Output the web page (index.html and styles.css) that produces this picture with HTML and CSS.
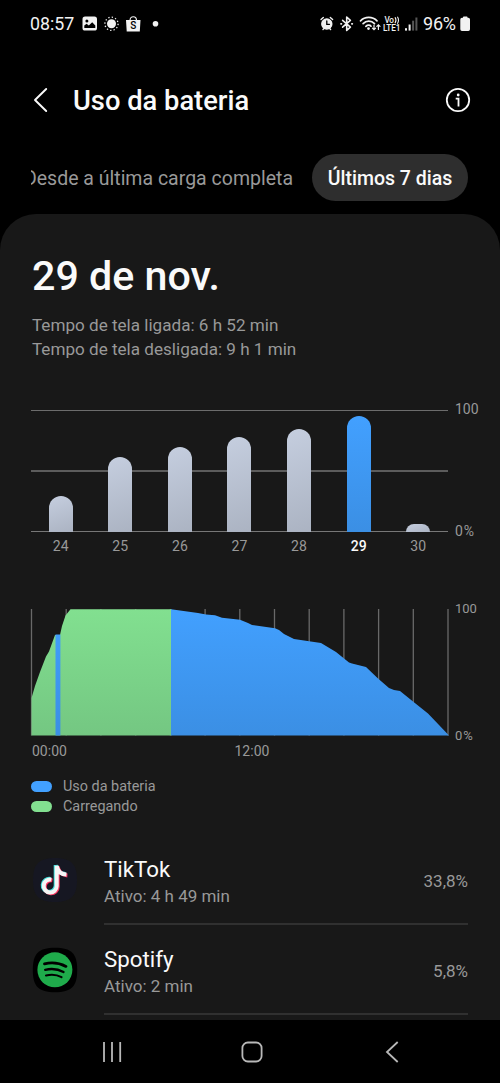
FILE: index.html
```html
<!DOCTYPE html>
<html lang="pt-BR">
<head>
<meta charset="utf-8">
<title>Uso da bateria</title>
<link rel="stylesheet" href="styles.css">
</head>
<body>
<div class="screen">
  <div class="status">
    <span class="clock">08:57</span>
    <svg class="notif" width="80" height="18" viewBox="0 0 80 18">
      <rect x="0.5" y="1.5" width="14.5" height="14" rx="2.6" fill="#f2f2f2"/>
      <circle cx="4.9" cy="6" r="1.5" fill="#000"/>
      <path d="M2.3 13V10.6L4.6 8.7L6.8 10.6L10.2 7.2L13.3 10.4V13Z" fill="#000"/>
      <circle cx="29.5" cy="8.8" r="4.5" fill="#f2f2f2"/>
      <circle cx="29.5" cy="8.8" r="6.6" fill="none" stroke="#f2f2f2" stroke-width="1.3" stroke-dasharray="1.3 2.156"/>
      <path d="M44 5H58.5L57.8 16.5H44.7Z" fill="#f2f2f2"/>
      <path d="M48 5.5C48 0.5 54.500 0.500 54.500 5.500" fill="none" stroke="#f2f2f2" stroke-width="1.2"/>
      <text x="51.3" y="14.3" class="bag-letter">S</text>
      <circle cx="73.500" cy="8.800" r="2.800" fill="#f2f2f2"/>
    </svg>
    <svg class="signals" width="102" height="18" viewBox="0 0 102 18">
      <g fill="none" stroke="#f2f2f2" stroke-width="1.4" stroke-linecap="round">
        <circle cx="6.8" cy="9" r="5" fill="#f2f2f2"/>
        <path d="M1 4.6L3.3 2.5M12.6 4.6L10.3 2.5M3 14.5L4 13.5M10.6 14.5L9.6 13.5"/>
        <path d="M6.8 6V9.3H9.5" stroke="#000" stroke-width="1.3"/>
        <path d="M22.6 5.3L30.4 12.2L26.7 15.400V2L30.400 5.400L22.600 12.200" stroke-linejoin="round" stroke-width="1.6"/>
        <path d="M21 8.800H21.400M31.900 8.800H32.300" stroke-width="1.800"/>
        <path d="M40.500 5.800C45 1.200 52.500 1.200 57 5.800M43.100 8.600C46.300 5.300 51.300 5.300 54.500 8.600M45.900 11.300C47.500 9.800 50 9.800 51 11.200" stroke-width="1.700"/>
        <circle cx="48.500" cy="13.600" r="0.700" fill="#f2f2f2"/>
        <path d="M54 10V14.600M52.400 13.100L54 14.700L55.600 13.100M58.400 14.500V10M56.800 11.400L58.400 9.800L60 11.400" stroke-width="1.200"/>
      </g>
      <text x="64.500" y="8" class="net" textLength="9.500">Vo</text>
      <path d="M75 2.300Q77 5.200 75 8.200M77.400 1.800Q79.600 5.200 77.400 8.700" fill="none" stroke="#f2f2f2" stroke-width="1.100"/>
      <text x="63" y="16" class="net" textLength="17.500">LTE1</text>
      <rect x="85" y="13.200" width="2" height="2.400" fill="#f2f2f2"/>
      <rect x="88.600" y="9.500" width="2" height="6.100" fill="#f2f2f2"/>
      <rect x="92.100" y="5.700" width="2" height="9.900" fill="#555"/>
      <rect x="95.400" y="2.500" width="2" height="13.100" fill="#555"/>
    </svg>
    <span class="level">96%</span>
    <svg class="battery" width="11" height="16" viewBox="0 0 11 16"><path d="M3 1.8V1.2Q3 .5 3.8 .5H6.8Q7.5 .5 7.5 1.2V1.8H8.3Q10 1.8 10 3.5V13.2Q10 15 8.3 15H2Q.3 15 .3 13.2V3.5Q.3 1.8 2 1.8Z" fill="#f2f2f2"/></svg>
  </div>

  <div class="header">
    <svg class="back" width="16" height="26" viewBox="0 0 16 26"><path d="M13.200 2L2 13L13.200 24" fill="none" stroke="#fafafa" stroke-width="1.9" stroke-linecap="round" stroke-linejoin="round"/></svg>
    <h1>Uso da bateria</h1>
    <svg class="info" width="26" height="26" viewBox="0 0 26 26"><circle cx="13" cy="13" r="11.200" fill="none" stroke="#fafafa" stroke-width="1.800"/><circle cx="13.200" cy="8" r="1.400" fill="#fafafa"/><path d="M10.700 11.700H13.500V19.600" fill="none" stroke="#fafafa" stroke-width="1.800"/></svg>
  </div>

  <div class="tabs">
    <div class="tab-clip"><span class="tab">Desde a última carga completa</span></div>
    <span class="tab-active">Últimos 7 dias</span>
  </div>

  <div class="panel">
    <h2>29 de nov.</h2>
    <div class="times">
      <div>Tempo de tela ligada: 6 h 52 min</div>
      <div>Tempo de tela desligada: 9 h 1 min</div>
    </div>

    <div class="chart days">
      <div class="plot-col">
        <div class="bars">
          <i style="height:36px"></i><i style="height:75px"></i><i style="height:85px"></i><i style="height:95px"></i><i style="height:103px"></i><i class="sel" style="height:116px"></i><i style="height:8px"></i>
        </div>
        <div class="day-labels"><span>24</span><span>25</span><span>26</span><span>27</span><span>28</span><span class="on">29</span><span>30</span></div>
      </div>
      <div class="scale"><span>100</span><span class="zero">0%</span></div>
    </div>

    <div class="chart hours">
      <div class="plot-col">
        <svg class="area" width="418" height="128" viewBox="0 0 418 128">
          <defs>
            <linearGradient id="blue" x1="0" y1="0" x2="0" y2="127" gradientUnits="userSpaceOnUse"><stop offset="0" stop-color="#42a0ff"/><stop offset="1" stop-color="#3b8fe4"/></linearGradient>
            <linearGradient id="green" x1="0" y1="0" x2="0" y2="127" gradientUnits="userSpaceOnUse"><stop offset="0" stop-color="#82e090"/><stop offset="1" stop-color="#74c782"/></linearGradient>
          </defs>
          <path d="M.5 1V127.500M35.200 1V127.500M69.900 1V127.500M104.700 1V127.500M139.400 1V127.500M174.100 1V127.500M208.800 1V127.500M243.500 1V127.500M278.200 1V127.500M312.900 1V127.500M347.600 1V127.500M382.300 1V127.500M417 1V127.500" stroke="#696969" stroke-width="1.3"/>
          <path d="M.5 127.500V90L4 78L9 64L15 48.500L18 43.500L24 27H29L31 18L34.500 7.500L39.500 1.300H140.500V127.500Z" fill="url(#green)"/>
          <rect x="24.500" y="26.500" width="4.900" height="101" fill="url(#blue)"/>
          <path d="M140 127.500V1.300L167 5L175 6.600L184 7.300L191 9.700L209 11.700L217 15L221 17L244 20.300L248 22L253 26L263 31L278 33.300L290 35.100L305 44L318 54.500L321 55.500L335 59L347 70.500L358 80L363 82L369 83L382 93.500L397 105.500L408 117L418 127.500Z" fill="url(#blue)"/>
        </svg>
        <div class="hour-labels"><span>00:00</span><span>12:00</span><span></span></div>
      </div>
      <div class="scale"><span>100</span><span class="zero">0%</span></div>
    </div>

    <div class="legend">
      <div><i class="use"></i>Uso da bateria</div>
      <div><i class="charge"></i>Carregando</div>
    </div>

    <div class="app">
      <svg class="app-icon" width="46" height="46" viewBox="0 0 46 46">
        <path d="M23 1C39 1 45 7 45 23S39 45 23 45S1 39 1 23S7 1 23 1Z" fill="#161722"/>
        <g fill="none" stroke-width="4">
          <path d="M24.300 8.500V28.800A6.500 6.500 0 1 1 19 22.400M24.300 8.500C25 13.500 28.500 17 34 17.400" stroke="#42dcda" transform="translate(-.6 -.5)"/>
          <path d="M24.300 8.500V28.800A6.500 6.500 0 1 1 19 22.400M24.300 8.500C25 13.500 28.500 17 34 17.400" stroke="#fb3660" transform="translate(1.400 1)"/>
          <path d="M24.300 8.500V28.800A6.500 6.500 0 1 1 19 22.400M24.300 8.500C25 13.500 28.500 17 34 17.400" stroke="#f5f5f5" transform="translate(.4 .2)"/>
        </g>
      </svg>
      <div class="app-body">
        <div class="app-text"><div class="name">TikTok</div><div class="sub">Ativo: 4 h 49 min</div></div>
        <div class="pct">33,8%</div>
      </div>
    </div>
    <div class="app">
      <svg class="app-icon" width="46" height="46" viewBox="0 0 46 46">
        <path d="M23 .8C39.500 .8 45.200 6.500 45.200 23S39.500 45.200 23 45.200S.8 39.500 .8 23S6.500 .8 23 .8Z" fill="#000"/>
        <circle cx="22.900" cy="22.800" r="17.500" fill="#1fab4b"/>
        <g fill="none" stroke="#000" stroke-linecap="round"><path d="M12.500 16.800C19 15.200 27 15.700 34 19.400" stroke-width="2.800"/><path d="M13.200 22.800C19 21.500 26 22 31.500 25" stroke-width="2.400"/><path d="M14 28.500C19 27.300 25 27.700 29.500 30.200" stroke-width="2.100"/></g>
      </svg>
      <div class="app-body">
        <div class="app-text"><div class="name">Spotify</div><div class="sub">Ativo: 2 min</div></div>
        <div class="pct">5,8%</div>
      </div>
    </div>
  </div>

  <div class="nav">
    <svg width="24" height="24" viewBox="0 0 24 24"><path d="M4 2V22M12 2V22M20.200 2V22" stroke="#b8b8b8" stroke-width="1.800"/></svg>
    <svg width="24" height="24" viewBox="0 0 24 24"><rect x="2.400" y="2.500" width="19.200" height="19" rx="5.500" fill="none" stroke="#b8b8b8" stroke-width="1.800"/></svg>
    <svg width="24" height="24" viewBox="0 0 24 24"><path d="M17.700 2L7 12L17.700 22" fill="none" stroke="#b8b8b8" stroke-width="1.800"/></svg>
  </div>
</div>
</body>
</html>
```

FILE: styles.css
```css
* { box-sizing: border-box; }
body { margin: 0; background: #000; font-family: Roboto, "Liberation Sans", sans-serif; color: #fafafa; }
svg { display: block; flex: none; }
.screen { width: 500px; height: 1083px; display: flex; flex-direction: column; overflow: hidden; white-space: nowrap; }

.status { height: 47px; padding: 0 29px 0 30px; display: flex; align-items: center; color: #f2f2f2; }
.clock { font-size: 17.800px; width: 52px; }
.signals { margin-left: auto; }
.level { font-size: 18px; width: 36px; margin-left: 1px; margin-right: 1px; letter-spacing: -0.200px; }
.bag-letter { font: 500 10px Roboto, sans-serif; text-anchor: middle; fill: #000; }
.net { font: 500 8.200px Roboto, sans-serif; fill: #f2f2f2; }

.header { height: 107px; padding: 0 29px 0 33px; display: flex; align-items: center; }
.header h1 { margin: 0 0 0 24px; font-size: 27.300px; font-weight: 500; line-height: 32px; }
.back { margin-bottom: 2px; }
.info { margin-left: auto; margin-bottom: 2px; }

.tabs { height: 47px; padding: 0 32px 0 31px; display: flex; justify-content: space-between; align-items: center; }
.tab-clip { width: 262px; overflow: hidden; display: flex; justify-content: flex-end; }
.tab { font-size: 19.500px; color: #999; line-height: 30px; padding-top: 2px; }
.tab-active { width: 156px; height: 47px; border-radius: 24px; background: #2e2e2e; font-size: 19.500px; font-weight: 500; line-height: 49px; text-align: center; }

.panel { margin-top: 13px; height: 806px; border-radius: 36px 36px 0 0; background: #181818; padding: 37px 32px 0 31px; overflow: hidden; }
.panel h2 { margin: 0 0 0 1px; font-size: 41.200px; font-weight: 500; line-height: 50px; }
.times { margin: 12px 0 0 1px; font-size: 17.100px; line-height: 24px; color: #999; }

.chart { display: flex; color: #999; font-size: 14px; }
.plot-col { width: 417px; flex: none; }
.scale { margin-left: 7px; display: flex; flex-direction: column; justify-content: space-between; line-height: 16px; }
.zero { letter-spacing: 1px; }
.days { margin-top: 48px; }
.bars { height: 123px; display: flex; justify-content: space-around; align-items: flex-end; background: linear-gradient(#6c6c6c, #6c6c6c) 0 1px / 100% 1px no-repeat, linear-gradient(#5c5c5c, #5c5c5c) 0 61px / 100% 2px no-repeat, linear-gradient(#777, #777) 0 100% / 100% 1px no-repeat; }
.bars i { width: 24px; border-radius: 12px 12px 0 0; background: linear-gradient(160deg, #c5cedf, #abb3c2); }
.bars .sel { background: linear-gradient(#42a0ff, #3b8fe4); }
.day-labels { display: flex; margin-top: 6px; line-height: 17px; padding-bottom: 1px; }
.day-labels span { flex: 1; text-align: center; letter-spacing: 0.200px; }
.day-labels .on { color: #fafafa; font-weight: 500; letter-spacing: 0; }
.days .scale { height: 138px; margin-top: -8px; }

.hours { margin-top: 52px; }
.area { overflow: visible; }
.hour-labels { display: flex; justify-content: space-between; margin-top: 6px; line-height: 18px; }
.hour-labels span:first-child { margin-left: 1px; }
.hour-labels span:last-child { width: 11px; }
.hours .scale { height: 143px; margin-top: -7px; font-size: 13px; }

.legend { margin-top: 17px; font-size: 14.400px; line-height: 19.500px; color: #999; }
.legend div { display: flex; align-items: center; }
.legend i { width: 21px; height: 11px; border-radius: 5.500px; margin-right: 11px; }
.use { background: #42a0ff; }
.charge { background: #82e090; }

.app { display: flex; height: 90px; align-items: center; }
.legend + .app { margin-top: 19px; }
.app-icon { margin-left: 1px; }
.app-body { margin-left: 26px; flex: 1; height: 90px; display: flex; align-items: center; justify-content: space-between; border-bottom: 2px solid #303030; }
.app-text { padding-top: 5px; }
.name { font-size: 22.300px; line-height: 28px; }
.sub, .pct { font-size: 17px; color: #999; line-height: 26px; }
.pct { padding-top: 3px; }

.nav { height: 63px; background: #000; display: flex; justify-content: space-between; align-items: center; padding: 0 96px 0 100px; }
```
